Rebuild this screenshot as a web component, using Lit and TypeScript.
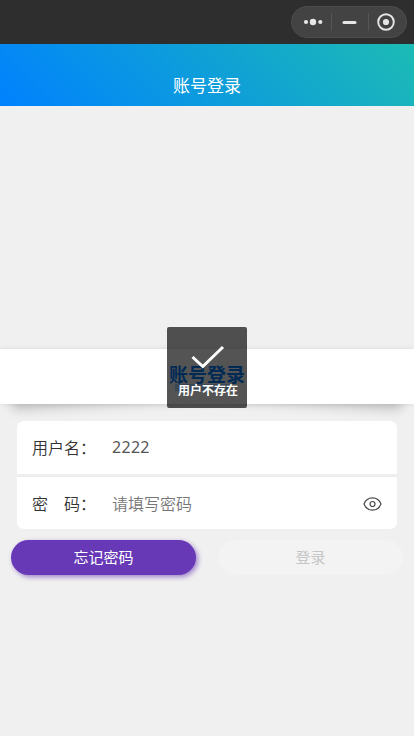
import { LitElement, html, css } from "lit";
import { customElement } from "lit/decorators.js";

@customElement("app-root")
export class AppRoot extends LitElement {
  static styles = css`
    :host {
      display: flex;
      flex-direction: column;
      position: relative;
      height: 736px;
      background: #f0f0f0;
      color: #333;
      font-family: "Noto Sans", "Noto Sans CJK SC", sans-serif;
      overflow: hidden;
    }
    * { box-sizing: border-box; }
    svg { display: block; }
    .system {
      height: 44px;
      flex: none;
      background: #2e2e2e;
      display: flex;
      justify-content: flex-end;
      padding: 6px 7px 0 0;
    }
    .capsule {
      width: 116px;
      height: 32px;
      border-radius: 16px;
      border: 1px solid #4d4d4d;
      background: #434343;
    }
    .nav {
      height: 62px;
      flex: none;
      padding-top: 21px;
      background: linear-gradient(45deg, #0081ff, #1cbbb4);
      color: #fff;
      font-size: 17px;
      line-height: 41px;
      text-align: center;
    }
    .banner {
      position: relative;
      z-index: 0;
      flex: none;
      height: 55px;
      margin-top: 243px;
    }
    .face {
      height: 55px;
      background: #fff;
      box-shadow: 0 0 5px rgba(0, 0, 0, 0.1);
      display: flex;
      justify-content: center;
      align-items: center;
    }
    .banner::before,
    .banner::after {
      position: absolute;
      content: "";
      top: 11px;
      bottom: 16.5px;
      left: 11px;
      width: 50%;
      box-shadow: 0 16.5px 11px rgba(0, 0, 0, 0.2);
      transform: rotate(-3deg);
      z-index: -1;
    }
    .banner::after {
      left: auto;
      right: 11px;
      transform: rotate(3deg);
    }
    .heading {
      position: relative;
      font-size: 19px;
      line-height: 27px;
      font-weight: 700;
      color: #0081ff;
      margin-top: -2px;
    }
    .heading::after {
      content: "";
      position: absolute;
      left: 6px;
      bottom: -2px;
      width: 55px;
      height: 7px;
      background: #0081ff;
      opacity: 0.3;
    }
    .form {
      flex: none;
      margin: 17px 17px 0;
      height: 108px;
      border-radius: 7px;
      overflow: hidden;
      font-size: 16px;
      display: flex;
      flex-direction: column;
      justify-content: space-between;
      background: #eee;
    }
    .row {
      height: 53px;
      background: #fff;
      padding: 0 15px 1px;
      display: flex;
      align-items: center;
    }
    .row.last { height: 52px; padding-bottom: 0; }
    .label { width: 80px; flex: none; white-space: pre; font-weight: 350; }
    .value { flex: 1; color: #555; letter-spacing: 0.3px; }
    .value.hint { color: #777; font-weight: 350; letter-spacing: 0; }
    .actions {
      flex: none;
      display: flex;
      justify-content: space-between;
      padding: 11px 11px 0;
    }
    .btn {
      width: 185px;
      height: 35px;
      border-radius: 18px;
      font-size: 15px;
      line-height: 35px;
      text-align: center;
    }
    .purple {
      background: #6739b6;
      color: #fff;
      box-shadow: 2px 2px 5px rgba(103, 57, 182, 0.6);
    }
    .muted {
      background: #f3f3f3;
      color: #c6c6c6;
    }
    .toast {
      position: absolute;
      left: 167px;
      top: 327px;
      width: 80px;
      height: 81px;
      z-index: 2;
      border-radius: 2px;
      background: rgba(0, 0, 0, 0.67);
      color: #fff;
      display: flex;
      flex-direction: column;
      align-items: center;
      padding: 17px 0 0 2px;
      font-size: 12px;
      font-weight: 700;
      line-height: 18px;
      white-space: nowrap;
    }
    .toast svg { margin-bottom: 12px; }
  `;

  render() {
    return html`
      <div class="system">
        <div class="capsule">
          <svg width="114" height="30" viewBox="0 0 114 30">
            <g fill="#e6e6e6">
              <circle cx="14" cy="15" r="2.1" />
              <circle cx="21" cy="15" r="3.2" />
              <circle cx="28.3" cy="15" r="2.1" />
              <rect x="50.5" y="14" width="14" height="3" rx="1.5" />
              <circle cx="94" cy="15" r="3.1" />
            </g>
            <circle cx="94" cy="15" r="7.8" fill="none" stroke="#e6e6e6" stroke-width="1.9" />
            <path d="M39.5 6v18M76.5 6v18" stroke="#565656" />
          </svg>
        </div>
      </div>
      <div class="nav">账号登录</div>
      <div class="banner">
        <div class="face"><div class="heading">账号登录</div></div>
      </div>
      <div class="form">
        <div class="row">
          <span class="label">用户名：</span><span class="value">2222</span>
        </div>
        <div class="row last">
          <span class="label">密　码：</span><span class="value hint">请填写密码</span>
          <svg width="19" height="18" viewBox="0 0 19 18" fill="none" stroke="#484848" stroke-width="1.2">
            <path d="M1 10C2.5 6 6 3.8 9.5 3.8S16.5 6 18 10C16.5 14 13 16.2 9.5 16.2S2.5 14 1 10Z" />
            <circle cx="9.5" cy="10" r="2.5" />
          </svg>
        </div>
      </div>
      <div class="actions">
        <div class="btn purple">忘记密码</div>
        <div class="btn muted">登录</div>
      </div>
      <div class="toast">
        <svg width="34" height="26" viewBox="0 0 34 26" fill="none" stroke="#fff" stroke-width="3">
          <path d="M1.5 13L11.8 22.5L32 3" />
        </svg>
        <span>用户不存在</span>
      </div>
    `;
  }
}
